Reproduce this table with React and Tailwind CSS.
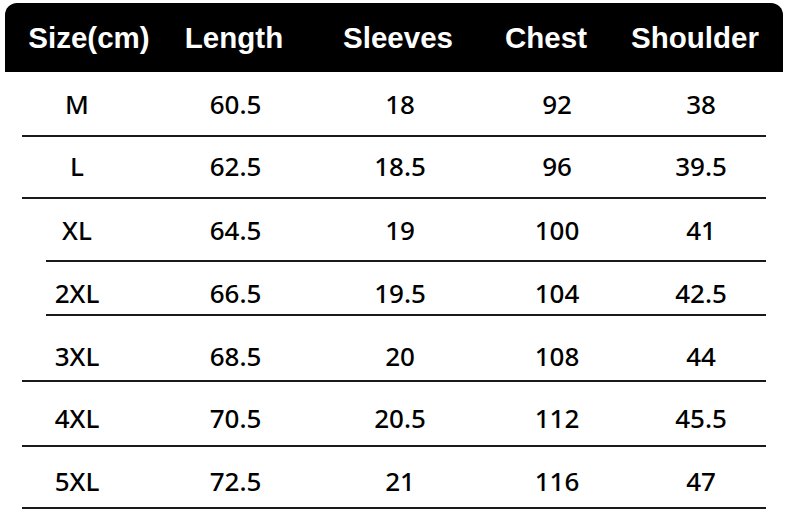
import React from "react";

const headers = ["Size(cm)", "Length", "Sleeves", "Chest", "Shoulder"];

const rows = [
  { cells: ["M", "60.5", "18", "92", "38"], h: "h-[63px]", pad: "", line: "ml-[22px]" },
  { cells: ["L", "62.5", "18.5", "96", "39.5"], h: "h-[60px]", pad: "pb-[2px]", line: "ml-[22px]" },
  { cells: ["XL", "64.5", "19", "100", "41"], h: "h-[61px]", pad: "", line: "ml-[46px]" },
  { cells: ["2XL", "66.5", "19.5", "104", "42.5"], h: "h-[52px]", pad: "pt-[10px]", line: "ml-[46px]" },
  { cells: ["3XL", "68.5", "20", "108", "44"], h: "h-[64px]", pad: "pt-[16px]", line: "ml-[22px]" },
  { cells: ["4XL", "70.5", "20.5", "112", "45.5"], h: "h-[63px]", pad: "pt-[9px]", line: "ml-[22px]" },
  { cells: ["5XL", "72.5", "21", "116", "47"], h: "h-[60px]", pad: "pt-[7px]", line: "ml-[22px]" },
];

export default function App() {
  return (
    <div className="w-[790px] h-[513px] bg-white overflow-hidden pt-[3px]">
      <div
        className="ml-[5px] w-[778px] h-[69px] bg-black rounded-t-[12px] grid grid-cols-[168px_122px_206px_90px_192px] items-center text-white font-bold text-[29.5px] pt-[1px]"
        style={{ fontFamily: '"Liberation Sans", Arial, sans-serif' }}
      >
        {headers.map((h, i) => (
          <div
            key={h}
            className={`flex justify-center whitespace-nowrap ${i === 4 ? "pl-4" : ""}`}
          >
            {h}
          </div>
        ))}
      </div>
      <div style={{ fontFamily: '"Noto Sans", "Open Sans", sans-serif' }}>
        {rows.map((r, idx) => (
          <div key={idx}>
            <div
              className={`grid grid-cols-[154px_163px_166px_148px_140px] items-center text-[26px] font-medium text-black leading-none ${r.h} ${r.pad}`}
            >
              {r.cells.map((c, j) => (
                <div key={j} className="flex justify-center whitespace-nowrap">
                  {c}
                </div>
              ))}
            </div>
            <div className={`h-[2px] bg-[#1a1a1a] w-auto mr-[24px] ${r.line}`} />
          </div>
        ))}
      </div>
    </div>
  );
}
